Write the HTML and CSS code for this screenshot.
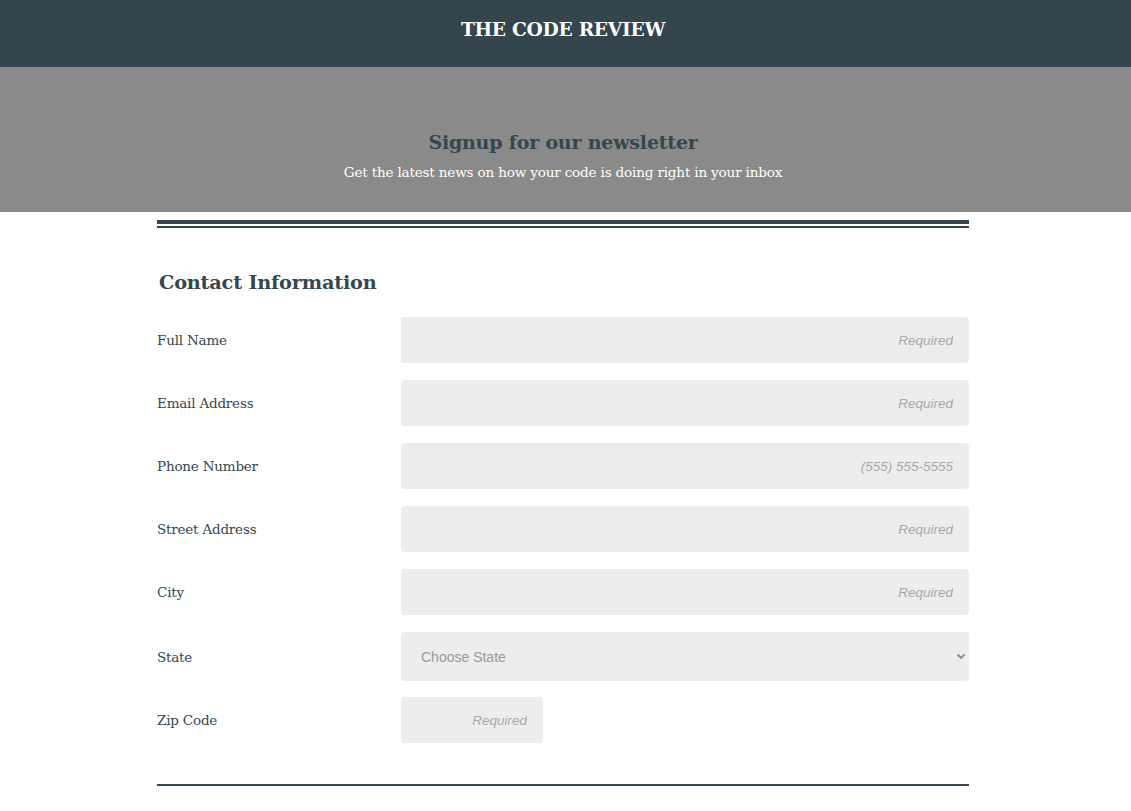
FILE: index.html
```html
<!DOCTYPE html>
<html lang="en">
<head>
<meta charset="utf-8">
<title>The Code Review</title>
<link rel="stylesheet" href="styles.css">
</head>
<body>
<header class="topbar">
  <h1 class="brand">THE CODE REVIEW</h1>
</header>
<section class="hero">
  <h2 class="hero-title">Signup for our newsletter</h2>
  <p class="hero-sub">Get the latest news on how your code is doing right in your inbox</p>
</section>
<main class="wrap">
  <div class="double-rule"></div>
  <form class="form">
    <h3 class="section-title">Contact Information</h3>
    <div class="row">
      <label class="label" for="name">Full Name</label>
      <input class="field" id="name" type="text" placeholder="Required">
    </div>
    <div class="row">
      <label class="label" for="email">Email Address</label>
      <input class="field" id="email" type="email" placeholder="Required">
    </div>
    <div class="row">
      <label class="label" for="phone">Phone Number</label>
      <input class="field" id="phone" type="tel" placeholder="(555) 555-5555">
    </div>
    <div class="row">
      <label class="label" for="street">Street Address</label>
      <input class="field" id="street" type="text" placeholder="Required">
    </div>
    <div class="row">
      <label class="label" for="city">City</label>
      <input class="field" id="city" type="text" placeholder="Required">
    </div>
    <div class="row row-select">
      <label class="label" for="state">State</label>
      <div class="select-wrap">
        <select class="select" id="state">
          <option>Choose State</option>
        </select>
        <svg class="chev" width="10" height="7" viewBox="0 0 10 7"><path d="M1.5 1.5 L5 5 L8.5 1.5" fill="none" stroke="#8a8a8a" stroke-width="1.8"/></svg>
      </div>
    </div>
    <div class="row">
      <label class="label" for="zip">Zip Code</label>
      <input class="field zip" id="zip" type="text" placeholder="Required">
    </div>
    <div class="single-rule"></div>
  </form>
</main>
</body>
</html>
```
FILE: styles.css
```css
* { box-sizing: border-box; }
html, body { margin: 0; padding: 0; background: #fff; }
body {
  font-family: "DejaVu Serif", "Liberation Serif", serif;
  color: #34474f;
  padding-right: 5px;
}
.topbar {
  background: #33464e;
  height: 67px;
  display: flex;
  align-items: center;
  justify-content: center;
  margin-right: -5px;
  padding-right: 5px;
}
.brand {
  margin: 0;
  color: #fff;
  font-size: 18.7px;
  font-weight: bold;
  letter-spacing: -0.3px;
  padding-bottom: 10px;
}
.hero {
  background: #8a8a8a;
  height: 145px;
  display: flex;
  flex-direction: column;
  align-items: center;
  justify-content: flex-end;
  padding-bottom: 32px;
  margin-right: -5px;
  padding-right: 5px;
}
.hero-title {
  margin: 0;
  font-size: 19px;
  font-weight: bold;
  color: #34474f;
  letter-spacing: -0.2px;
}
.hero-sub {
  margin: 11px 0 0;
  font-size: 13.6px;
  color: #fff;
  letter-spacing: -0.2px;
}
.wrap {
  width: 812px;
  margin: 0 auto;
  padding-top: 8px;
}
.double-rule {
  height: 8px;
  border-top: 4px solid #33464e;
  border-bottom: 2px solid #33464e;
}
.form {
  padding-top: 40px;
}
.section-title {
  margin: 0 0 20px 2px;
  font-size: 19.3px;
  font-weight: bold;
  color: #34474f;
  letter-spacing: -0.2px;
  line-height: 29px;
}
.row {
  display: flex;
  align-items: center;
  margin-bottom: 17px;
}
.row-select { margin-bottom: 16px; }
.label {
  width: 244px;
  flex: none;
  font-size: 13.5px;
  color: #34474f;
  letter-spacing: -0.2px;
}
.field {
  width: 568px;
  height: 46px;
  border: none;
  border-radius: 4px;
  background: #ededed;
  font-family: "Liberation Sans", Arial, sans-serif;
  font-size: 13.5px;
  text-align: right;
  padding: 0 16px;
  outline: none;
}
.field::placeholder {
  color: #a8a8a8;
  font-style: italic;
}
.zip { width: 142px; }
.select-wrap {
  position: relative;
  width: 568px;
  height: 49px;
}
.select {
  appearance: none;
  -webkit-appearance: none;
  width: 100%;
  height: 100%;
  border: none;
  border-radius: 4px;
  background: #ededed;
  font-family: "Liberation Sans", Arial, sans-serif;
  font-size: 14px;
  color: #9a9a9a;
  padding: 0 20px;
  outline: none;
}
.chev {
  position: absolute;
  right: 3px;
  top: 21px;
}
.single-rule {
  margin-top: 41px;
  height: 2px;
  background: #33464e;
}
```
